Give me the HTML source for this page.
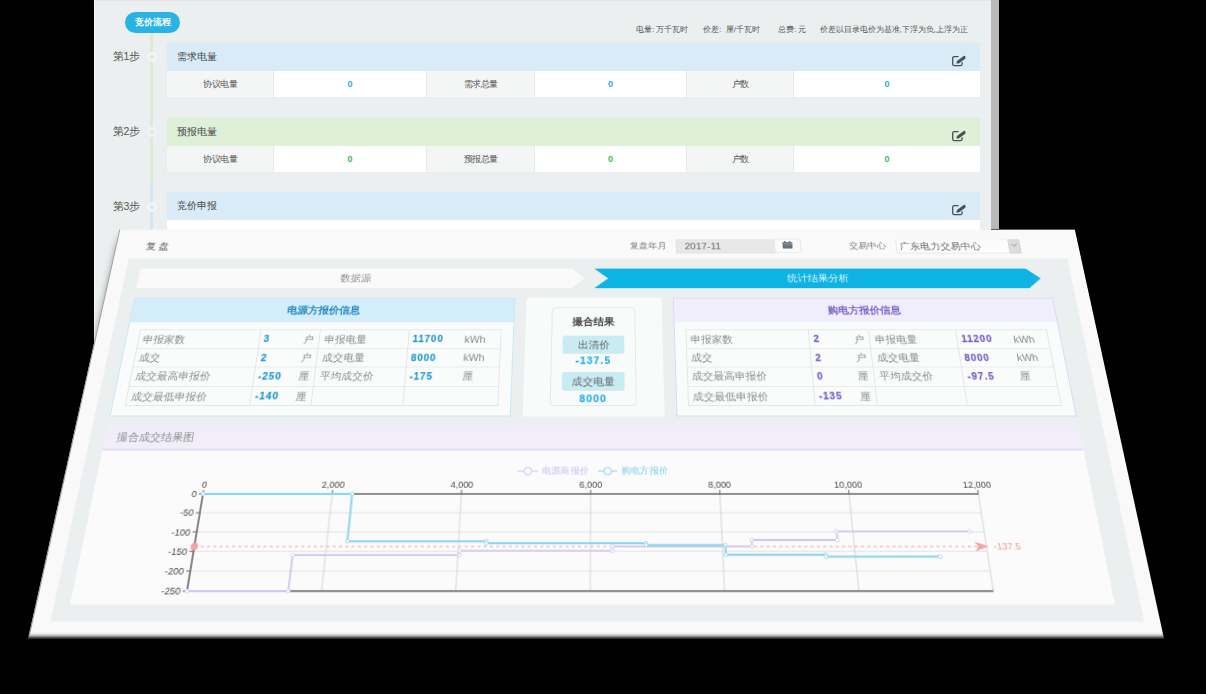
<!DOCTYPE html>
<html><head><meta charset="utf-8">
<style>
*{box-sizing:border-box;margin:0;padding:0}
html,body{width:1206px;height:694px;overflow:hidden;background:#000}
body{position:relative;font-family:"Liberation Sans",sans-serif;color:#555}
.abs{position:absolute}
#top{position:absolute;left:94px;top:0;width:897px;height:600px;background:#ebeff0;overflow:hidden}
#scroll{position:absolute;left:991px;top:0;width:8px;height:229px;background:#b9b9b9}
.pill{left:31px;top:12px;width:55px;height:21px;border-radius:11px;background:#27b4e4;color:#fff;font-size:9px;font-weight:bold;text-align:center;line-height:21px}
.tl{left:56px;width:3px;background:#dcebd4}
.step{left:19px;font-size:10.5px;color:#555;line-height:12px}
.dot{left:52.5px;width:10px;height:10px;border-radius:50%;border:3px solid #f3f5f5;background:#d9ead2}
.card{left:73px;width:813px;height:54px;background:#fff;box-shadow:0 0 1px #dfe3e5}
.card .hd{position:absolute;left:0;top:0;width:100%;height:28px;font-size:10px;color:#444;padding-left:10px;line-height:27px}
.card .row{position:absolute;left:0;top:28px;width:100%;height:26px}
.cell{position:absolute;top:0;height:26px;line-height:26px;text-align:center;font-size:8.5px;color:#555}
.lab{background:#f4f6f6;border-right:1px solid #e6eaeb}
.val{font-weight:bold;font-size:9px}
.edit{position:absolute;left:785px;top:11.6px;width:14px;height:12px}
.lg{top:24px;font-size:8px;color:#555;white-space:nowrap;line-height:12px}
.z{display:inline-block;width:1em;text-align:center;font-style:normal}
</style></head><body>
<div id="top">
  <div class="abs" style="left:0;top:0;width:100%;height:1px;background:#e1e5e7"></div>
  <div class="abs" style="left:0;top:0;width:1px;height:100%;background:#f7f8f8"></div>
  <div class="abs pill"><i class="z">竞</i><i class="z">价</i><i class="z">流</i><i class="z">程</i></div>
  <div class="abs tl" style="top:33px;height:150px"></div>
  <div class="abs tl" style="top:183px;height:520px;background:#d3e6f3"></div>
  <div class="abs step" style="top:50px"><i class="z">第</i>1<i class="z">步</i></div>
  <div class="abs dot" style="top:51.5px"></div>
  <div class="abs step" style="top:125px"><i class="z">第</i>2<i class="z">步</i></div>
  <div class="abs dot" style="top:126.5px"></div>
  <div class="abs step" style="top:200px"><i class="z">第</i>3<i class="z">步</i></div>
  <div class="abs dot" style="top:201.5px;background:#d3e6f3"></div>
  <div class="abs lg" style="left:542px"><i class="z">电</i><i class="z">量</i>: <i class="z">万</i><i class="z">千</i><i class="z">瓦</i><i class="z">时</i></div><div class="abs lg" style="left:609px"><i class="z">价</i><i class="z">差</i>:&nbsp;&nbsp;<i class="z">厘</i>/<i class="z">千</i><i class="z">瓦</i><i class="z">时</i></div><div class="abs lg" style="left:684px"><i class="z">总</i><i class="z">费</i>: <i class="z">元</i></div><div class="abs lg" style="left:725.5px"><i class="z">价</i><i class="z">差</i><i class="z">以</i><i class="z">目</i><i class="z">录</i><i class="z">电</i><i class="z">价</i><i class="z">为</i><i class="z">基</i><i class="z">准</i>,<i class="z">下</i><i class="z">浮</i><i class="z">为</i><i class="z">负</i>,<i class="z">上</i><i class="z">浮</i><i class="z">为</i><i class="z">正</i></div>
  <!-- card 1 -->
  <div class="abs card" style="top:43px">
    <div class="hd" style="background:#d9ebf7"><i class="z">需</i><i class="z">求</i><i class="z">电</i><i class="z">量</i></div>
    <svg class="edit" viewBox="0 0 14 12"><path d="M6.6 1.6H2.3A1.6 1.6 0 0 0 0.7 3.2V9.1A1.6 1.6 0 0 0 2.3 10.7H8.5A1.6 1.6 0 0 0 10.1 9.1V7.2" fill="none" stroke="#4a5056" stroke-width="1.3"/><path d="M4.3 8.6L5.0 6.1L11.7 1.1A1.1 1.1 0 0 1 13.3 1.5L13.5 3.5L6.8 8.5Z" fill="#4a5056"/></svg>
    <div class="row">
      <div class="cell lab" style="left:0;width:107px"><i class="z">协</i><i class="z">议</i><i class="z">电</i><i class="z">量</i></div>
      <div class="cell val" style="left:107px;width:152px;color:#2aaee2">0</div>
      <div class="cell lab" style="left:259px;width:109px;border-left:1px solid #e6eaeb"><i class="z">需</i><i class="z">求</i><i class="z">总</i><i class="z">量</i></div>
      <div class="cell val" style="left:368px;width:151px;color:#2aaee2">0</div>
      <div class="cell lab" style="left:519px;width:108px;border-left:1px solid #e6eaeb"><i class="z">户</i><i class="z">数</i></div>
      <div class="cell val" style="left:627px;width:186px;color:#2aaee2">0</div>
    </div>
  </div>
  <!-- card 2 -->
  <div class="abs card" style="top:118px">
    <div class="hd" style="background:#dff0d8"><i class="z">预</i><i class="z">报</i><i class="z">电</i><i class="z">量</i></div>
    <svg class="edit" viewBox="0 0 14 12"><path d="M6.6 1.6H2.3A1.6 1.6 0 0 0 0.7 3.2V9.1A1.6 1.6 0 0 0 2.3 10.7H8.5A1.6 1.6 0 0 0 10.1 9.1V7.2" fill="none" stroke="#4a5056" stroke-width="1.3"/><path d="M4.3 8.6L5.0 6.1L11.7 1.1A1.1 1.1 0 0 1 13.3 1.5L13.5 3.5L6.8 8.5Z" fill="#4a5056"/></svg>
    <div class="row">
      <div class="cell lab" style="left:0;width:107px"><i class="z">协</i><i class="z">议</i><i class="z">电</i><i class="z">量</i></div>
      <div class="cell val" style="left:107px;width:152px;color:#3cb95a">0</div>
      <div class="cell lab" style="left:259px;width:109px;border-left:1px solid #e6eaeb"><i class="z">预</i><i class="z">报</i><i class="z">总</i><i class="z">量</i></div>
      <div class="cell val" style="left:368px;width:151px;color:#3cb95a">0</div>
      <div class="cell lab" style="left:519px;width:108px;border-left:1px solid #e6eaeb"><i class="z">户</i><i class="z">数</i></div>
      <div class="cell val" style="left:627px;width:186px;color:#3cb95a">0</div>
    </div>
  </div>
  <!-- card 3 -->
  <div class="abs card" style="top:192px">
    <div class="hd" style="background:#d9ebf7"><i class="z">竞</i><i class="z">价</i><i class="z">申</i><i class="z">报</i></div>
    <svg class="edit" viewBox="0 0 14 12"><path d="M6.6 1.6H2.3A1.6 1.6 0 0 0 0.7 3.2V9.1A1.6 1.6 0 0 0 2.3 10.7H8.5A1.6 1.6 0 0 0 10.1 9.1V7.2" fill="none" stroke="#4a5056" stroke-width="1.3"/><path d="M4.3 8.6L5.0 6.1L11.7 1.1A1.1 1.1 0 0 1 13.3 1.5L13.5 3.5L6.8 8.5Z" fill="#4a5056"/></svg>
    <div class="row"></div>
  </div>
</div>
<div id="scroll"></div>

<!-- BOTTOM PANEL -->
<style>
#bp{position:absolute;left:0;top:0;width:1045px;height:420px;transform-origin:0 0;background:#f9f9f9;outline:1px solid transparent;font-family:"Liberation Sans",sans-serif}
#bp .t{position:absolute;white-space:nowrap;line-height:1}
.arrowL{left:32px;top:47px;width:478px;height:23px;background:#fafafa;clip-path:polygon(0 0,463px 0,477.5px 50%,463px 100%,0 100%)}
.arrowR{left:519.5px;top:47px;width:477.5px;height:23px;background:#0db3e3;clip-path:polygon(0 0,463.5px 0,477.5px 50%,463.5px 100%,0 100%,15px 50%)}
.pnl{position:absolute;top:81px;height:130px;background:#fafcfc}
.tbl{position:absolute;width:378px;border:1px solid #e3e6e7}
.tbl .r{position:absolute;left:0;width:100%;height:1px;background:#e8eaea}
.tbl .c{position:absolute;top:0;height:100%;width:1px;background:#e3e6e7}
.tbl .t{font-size:11px;color:#8a8a8a}
.tbl .v{font-size:10px;font-weight:bold;letter-spacing:1px;margin-top:0.5px;-webkit-text-stroke:0.25px currentColor}
</style>
<div id="bp" style="transform:matrix3d(0.9143157895,2.719780807e-17,0,6.68743744e-20,-0.2268856434,0.7287954005,0,-0.0003764543971,0,0,1,0,119.37,229.6,0,1)">
  <!-- header -->
  <div class="abs" style="left:14px;top:11px;width:1017px;height:24px;background:#fafafa"></div>
  <div class="t" style="left:33px;top:14.5px;font-size:11px;color:#7a7a7a;-webkit-text-stroke:0.2px currentColor"><i class="z">复</i> <i class="z">盘</i></div>
  <div class="t" style="left:558px;top:15px;font-size:10px;color:#777"><i class="z">复</i><i class="z">盘</i><i class="z">年</i><i class="z">月</i></div>
  <div class="abs" style="left:608px;top:11.5px;width:108px;height:17px;background:#e8e8e8;border:1px solid #e2e2e2"></div>
  <div class="t" style="left:617.5px;top:15px;font-size:11px;color:#666">2017-11</div>
  <div class="abs" style="left:714.5px;top:11.2px;width:29.7px;height:17.3px;background:#fbfbfb;border:1px solid #e6e8e8;border-radius:2px"></div>
  <svg class="abs" style="left:724px;top:13.8px" width="10.5" height="9" viewBox="0 0 10.5 9"><rect x="0" y="1.2" width="10.5" height="7.8" rx="0.8" fill="#5d6672"/><rect x="0.8" y="2.9" width="8.9" height="0.8" fill="#c9ced3"/><rect x="2" y="0" width="1.3" height="2" fill="#5d6672"/><rect x="7.2" y="0" width="1.3" height="2" fill="#5d6672"/><rect x="1.2" y="4.6" width="8.1" height="3.4" fill="#6b7480"/></svg>
  <div class="t" style="left:795.5px;top:15px;font-size:10px;color:#777"><i class="z">交</i><i class="z">易</i><i class="z">中</i><i class="z">心</i></div>
  <div class="abs" style="left:847px;top:12px;width:134.5px;height:16.5px;background:#fcfcfc;border:1px solid #e6e6e6;border-top-color:#f4f4f4"></div>
  <div class="t" style="left:851px;top:15px;font-size:11px;color:#666"><i class="z">广</i><i class="z">东</i><i class="z">电</i><i class="z">力</i><i class="z">交</i><i class="z">易</i><i class="z">中</i><i class="z">心</i></div>
  <div class="abs" style="left:969px;top:12px;width:12.5px;height:16.5px;background:#dcdcdc;border:1px solid #d2d2d2"></div>
  <svg class="abs" style="left:971px;top:16.3px" width="9" height="6" viewBox="0 0 9 6"><path d="M1.5 1.5l3 2.5 3-2.5" fill="none" stroke="#888" stroke-width="1"/></svg>
  <!-- gray band -->
  <div class="abs" style="left:16.5px;top:35px;width:1013px;height:371.7px;background:#eceff0"></div>
  <!-- arrows -->
  <div class="abs arrowL"></div>
  <div class="t" style="left:247.5px;top:53px;font-size:11px;color:#8d8d8d"><i class="z">数</i><i class="z">据</i><i class="z">源</i></div>
  <div class="abs arrowR"></div>
  <div class="t" style="left:725.5px;top:53px;font-size:11px;color:#dff4fb"><i class="z">统</i><i class="z">计</i><i class="z">结</i><i class="z">果</i><i class="z">分</i><i class="z">析</i></div>
  <!-- left panel -->
  <div class="pnl" style="left:32px;width:404px;border:1px solid #c5e9f6">
    <div class="abs" style="left:0;top:0;width:100%;height:26.5px;background:#d3eef9"></div>
    <div class="t" style="left:0;width:100%;text-align:center;top:8px;font-size:11px;font-weight:bold;color:#2488c4"><i class="z">电</i><i class="z">源</i><i class="z">方</i><i class="z">报</i><i class="z">价</i><i class="z">信</i><i class="z">息</i></div>
    <div class="tbl" style="left:11.7px;top:35.4px;height:82.6px">
    <div class="r" style="top:19.6px"></div>
    <div class="r" style="top:39.6px"></div>
    <div class="r" style="top:60.8px"></div>
    <div class="c" style="left:125px"></div>
    <div class="c" style="left:187.5px"></div>
    <div class="c" style="left:280px"></div>
    <div class="t" style="left:4px;top:4.5px"><i class="z">申</i><i class="z">报</i><i class="z">家</i><i class="z">数</i></div>
    <div class="t v" style="left:130.0px;top:4.5px;color:#2a9ad3">3</div>
    <div class="t" style="left:171.5px;top:4.5px"><i class="z">户</i></div>
    <div class="t" style="left:193.5px;top:4.5px"><i class="z">申</i><i class="z">报</i><i class="z">电</i><i class="z">量</i></div>
    <div class="t v" style="left:285.0px;top:4.5px;color:#2a9ad3">11700</div>
    <div class="t" style="left:339.0px;top:4.5px">kWh</div>
    <div class="t" style="left:4px;top:25.1px"><i class="z">成</i><i class="z">交</i></div>
    <div class="t v" style="left:130.0px;top:25.1px;color:#2a9ad3">2</div>
    <div class="t" style="left:171.5px;top:25.1px"><i class="z">户</i></div>
    <div class="t" style="left:193.5px;top:25.1px"><i class="z">成</i><i class="z">交</i><i class="z">电</i><i class="z">量</i></div>
    <div class="t v" style="left:285.0px;top:25.1px;color:#2a9ad3">8000</div>
    <div class="t" style="left:339.0px;top:25.1px">kWh</div>
    <div class="t" style="left:4px;top:45.1px"><i class="z">成</i><i class="z">交</i><i class="z">最</i><i class="z">高</i><i class="z">申</i><i class="z">报</i><i class="z">价</i></div>
    <div class="t v" style="left:130.0px;top:45.1px;color:#2a9ad3">-250</div>
    <div class="t" style="left:171.5px;top:45.1px"><i class="z">厘</i></div>
    <div class="t" style="left:193.5px;top:45.1px"><i class="z">平</i><i class="z">均</i><i class="z">成</i><i class="z">交</i><i class="z">价</i></div>
    <div class="t v" style="left:285.0px;top:45.1px;color:#2a9ad3">-175</div>
    <div class="t" style="left:339.0px;top:45.1px"><i class="z">厘</i></div>
    <div class="t" style="left:4px;top:66.3px"><i class="z">成</i><i class="z">交</i><i class="z">最</i><i class="z">低</i><i class="z">申</i><i class="z">报</i><i class="z">价</i></div>
    <div class="t v" style="left:130.0px;top:66.3px;color:#2a9ad3">-140</div>
    <div class="t" style="left:171.5px;top:66.3px"><i class="z">厘</i></div>
    </div>
  </div>
  <!-- middle panel -->
  <div class="pnl" style="left:447.5px;width:143px;background:#f9fafa">
    <div class="abs" style="left:27px;top:10.8px;width:88.5px;height:108px;border:1px solid #d7edf4;border-radius:4px"></div>
    <div class="t" style="left:0;width:100%;text-align:center;top:21.6px;font-size:11px;font-weight:bold;color:#444"><i class="z">撮</i><i class="z">合</i><i class="z">结</i><i class="z">果</i></div>
    <div class="abs" style="left:39px;top:43.3px;width:64px;height:19.5px;background:#c9ebf3;border-radius:3px"></div>
    <div class="t" style="left:0;width:100%;text-align:center;top:47.8px;font-size:11px;color:#666"><i class="z">出</i><i class="z">清</i><i class="z">价</i></div>
    <div class="t" style="left:0;width:100%;text-align:center;top:64.6px;font-size:10.5px;font-weight:bold;letter-spacing:1.2px;-webkit-text-stroke:0.25px currentColor;color:#2ab0e4">-137.5</div>
    <div class="abs" style="left:39px;top:83.4px;width:64px;height:20px;background:#c9ebf3;border-radius:3px"></div>
    <div class="t" style="left:0;width:100%;text-align:center;top:87.8px;font-size:11px;color:#666"><i class="z">成</i><i class="z">交</i><i class="z">电</i><i class="z">量</i></div>
    <div class="t" style="left:0;width:100%;text-align:center;top:106px;font-size:10.5px;font-weight:bold;letter-spacing:1.2px;-webkit-text-stroke:0.25px currentColor;color:#2ab0e4">8000</div>
  </div>
  <!-- right panel -->
  <div class="pnl" style="left:602.5px;width:403px;border:1px solid #ddd7f6">
    <div class="abs" style="left:0;top:0;width:100%;height:27px;background:#f0eefb"></div>
    <div class="t" style="left:0;width:100%;text-align:center;top:8px;font-size:11px;font-weight:bold;color:#7b62c8"><i class="z">购</i><i class="z">电</i><i class="z">方</i><i class="z">报</i><i class="z">价</i><i class="z">信</i><i class="z">息</i></div>
    <div class="tbl" style="left:11.7px;top:35.4px;height:82.6px">
    <div class="r" style="top:19.6px"></div>
    <div class="r" style="top:39.6px"></div>
    <div class="r" style="top:60.8px"></div>
    <div class="c" style="left:127px"></div>
    <div class="c" style="left:189.5px"></div>
    <div class="c" style="left:281px"></div>
    <div class="t" style="left:4px;top:4.5px"><i class="z">申</i><i class="z">报</i><i class="z">家</i><i class="z">数</i></div>
    <div class="t v" style="left:132.0px;top:4.5px;color:#7a5fc6">2</div>
    <div class="t" style="left:173.5px;top:4.5px"><i class="z">户</i></div>
    <div class="t" style="left:195.5px;top:4.5px"><i class="z">申</i><i class="z">报</i><i class="z">电</i><i class="z">量</i></div>
    <div class="t v" style="left:286.0px;top:4.5px;color:#7a5fc6">11200</div>
    <div class="t" style="left:340.0px;top:4.5px">kWh</div>
    <div class="t" style="left:4px;top:25.1px"><i class="z">成</i><i class="z">交</i></div>
    <div class="t v" style="left:132.0px;top:25.1px;color:#7a5fc6">2</div>
    <div class="t" style="left:173.5px;top:25.1px"><i class="z">户</i></div>
    <div class="t" style="left:195.5px;top:25.1px"><i class="z">成</i><i class="z">交</i><i class="z">电</i><i class="z">量</i></div>
    <div class="t v" style="left:286.0px;top:25.1px;color:#7a5fc6">8000</div>
    <div class="t" style="left:340.0px;top:25.1px">kWh</div>
    <div class="t" style="left:4px;top:45.1px"><i class="z">成</i><i class="z">交</i><i class="z">最</i><i class="z">高</i><i class="z">申</i><i class="z">报</i><i class="z">价</i></div>
    <div class="t v" style="left:132.0px;top:45.1px;color:#7a5fc6">0</div>
    <div class="t" style="left:173.5px;top:45.1px"><i class="z">厘</i></div>
    <div class="t" style="left:195.5px;top:45.1px"><i class="z">平</i><i class="z">均</i><i class="z">成</i><i class="z">交</i><i class="z">价</i></div>
    <div class="t v" style="left:286.0px;top:45.1px;color:#7a5fc6">-97.5</div>
    <div class="t" style="left:340.0px;top:45.1px"><i class="z">厘</i></div>
    <div class="t" style="left:4px;top:66.3px"><i class="z">成</i><i class="z">交</i><i class="z">最</i><i class="z">低</i><i class="z">申</i><i class="z">报</i><i class="z">价</i></div>
    <div class="t v" style="left:132.0px;top:66.3px;color:#7a5fc6">-135</div>
    <div class="t" style="left:173.5px;top:66.3px"><i class="z">厘</i></div>
    </div>
  </div>
  <!-- chart header -->
  <div class="abs" style="left:32px;top:220px;width:973.5px;height:25.5px;background:#f1eefa;border-bottom:2px solid #e4ddf6"></div>
  <div class="t" style="left:44px;top:227px;font-size:11px;color:#8d8d8d"><i class="z">撮</i><i class="z">合</i><i class="z">成</i><i class="z">交</i><i class="z">结</i><i class="z">果</i><i class="z">图</i></div>
  <!-- chart area -->
  <div class="abs" style="left:32px;top:245.5px;width:973.5px;height:146px;background:#fbfbfb"></div>
  <svg class="abs" style="left:0;top:0;overflow:visible" width="1045" height="420" viewBox="0 0 1045 420" font-family="Liberation Sans, sans-serif">
<line x1="139.0" y1="307.2" x2="894.8" y2="307.2" stroke="#e3e3e3" stroke-width="1"/>
<line x1="139.0" y1="325.4" x2="894.8" y2="325.4" stroke="#e3e3e3" stroke-width="1"/>
<line x1="139.0" y1="343.6" x2="894.8" y2="343.6" stroke="#e3e3e3" stroke-width="1"/>
<line x1="139.0" y1="361.8" x2="894.8" y2="361.8" stroke="#e3e3e3" stroke-width="1"/>
<line x1="265.0" y1="289.0" x2="265.0" y2="380.0" stroke="#d6d6d6" stroke-width="1"/>
<line x1="390.9" y1="289.0" x2="390.9" y2="380.0" stroke="#d6d6d6" stroke-width="1"/>
<line x1="516.9" y1="289.0" x2="516.9" y2="380.0" stroke="#d6d6d6" stroke-width="1"/>
<line x1="642.9" y1="289.0" x2="642.9" y2="380.0" stroke="#d6d6d6" stroke-width="1"/>
<line x1="768.8" y1="289.0" x2="768.8" y2="380.0" stroke="#d6d6d6" stroke-width="1"/>
<line x1="894.8" y1="289.0" x2="894.8" y2="380.0" stroke="#d6d6d6" stroke-width="1"/>
<line x1="139.0" y1="289.0" x2="894.8" y2="289.0" stroke="#6e6e6e" stroke-width="1.6"/>
<line x1="139.0" y1="380.0" x2="894.8" y2="380.0" stroke="#6e6e6e" stroke-width="1.6"/>
<line x1="139.0" y1="289.0" x2="139.0" y2="380.0" stroke="#555" stroke-width="1.4"/>
<line x1="139.0" y1="285.0" x2="139.0" y2="289.0" stroke="#6e6e6e" stroke-width="1"/>
<text x="139.0" y="283.0" text-anchor="middle" font-size="9" fill="#4a4a4a">0</text>
<line x1="265.0" y1="285.0" x2="265.0" y2="289.0" stroke="#6e6e6e" stroke-width="1"/>
<text x="265.0" y="283.0" text-anchor="middle" font-size="9" fill="#4a4a4a">2,000</text>
<line x1="390.9" y1="285.0" x2="390.9" y2="289.0" stroke="#6e6e6e" stroke-width="1"/>
<text x="390.9" y="283.0" text-anchor="middle" font-size="9" fill="#4a4a4a">4,000</text>
<line x1="516.9" y1="285.0" x2="516.9" y2="289.0" stroke="#6e6e6e" stroke-width="1"/>
<text x="516.9" y="283.0" text-anchor="middle" font-size="9" fill="#4a4a4a">6,000</text>
<line x1="642.9" y1="285.0" x2="642.9" y2="289.0" stroke="#6e6e6e" stroke-width="1"/>
<text x="642.9" y="283.0" text-anchor="middle" font-size="9" fill="#4a4a4a">8,000</text>
<line x1="768.8" y1="285.0" x2="768.8" y2="289.0" stroke="#6e6e6e" stroke-width="1"/>
<text x="768.8" y="283.0" text-anchor="middle" font-size="9" fill="#4a4a4a">10,000</text>
<line x1="894.8" y1="285.0" x2="894.8" y2="289.0" stroke="#6e6e6e" stroke-width="1"/>
<text x="894.8" y="283.0" text-anchor="middle" font-size="9" fill="#4a4a4a">12,000</text>
<line x1="135.0" y1="289.0" x2="139.0" y2="289.0" stroke="#6e6e6e" stroke-width="1"/>
<text x="133.0" y="292.3" text-anchor="end" font-size="9" fill="#4a4a4a">0</text>
<line x1="135.0" y1="307.2" x2="139.0" y2="307.2" stroke="#6e6e6e" stroke-width="1"/>
<text x="133.0" y="310.5" text-anchor="end" font-size="9" fill="#4a4a4a">-50</text>
<line x1="135.0" y1="325.4" x2="139.0" y2="325.4" stroke="#6e6e6e" stroke-width="1"/>
<text x="133.0" y="328.7" text-anchor="end" font-size="9" fill="#4a4a4a">-100</text>
<line x1="135.0" y1="343.6" x2="139.0" y2="343.6" stroke="#6e6e6e" stroke-width="1"/>
<text x="133.0" y="346.9" text-anchor="end" font-size="9" fill="#4a4a4a">-150</text>
<line x1="135.0" y1="361.8" x2="139.0" y2="361.8" stroke="#6e6e6e" stroke-width="1"/>
<text x="133.0" y="365.1" text-anchor="end" font-size="9" fill="#4a4a4a">-200</text>
<line x1="135.0" y1="380.0" x2="139.0" y2="380.0" stroke="#6e6e6e" stroke-width="1"/>
<text x="133.0" y="383.3" text-anchor="end" font-size="9" fill="#4a4a4a">-250</text>
<line x1="139.0" y1="339.1" x2="888.8" y2="339.1" stroke="#f4a6a6" stroke-width="1" stroke-dasharray="3 3"/>
<path d="M896.8 339.1 l-13 -4.5 l3.5 4.5 l-3.5 4.5z" fill="#f3a0a0"/>
<text x="901.8" y="342.2" font-size="9" fill="#f29a9a">-137.5</text>
<circle cx="139.0" cy="339.1" r="3.5" fill="#f3a3a3"/>
<path d="M139.0 380.0 L233.8 380.0 L233.8 347.1 L392.2 347.1 L392.2 343.2 L537.9 343.2 L537.9 339.2 L671.2 339.2 L671.2 333.0 L753.1 333.0 L753.1 324.8 L880.6 324.8" fill="none" stroke="#d2c9f0" stroke-width="1.8"/>
<path d="M139.0 289.0 L284.5 289.0 L284.5 334.3 L417.4 334.3 L417.4 336.1 L570.1 336.1 L570.1 337.8 L645.7 337.8 L645.7 346.7 L740.8 346.7 L740.8 348.5 L849.1 348.5" fill="none" stroke="#8fd5ef" stroke-width="2"/>
<circle cx="139.0" cy="380.0" r="1.7" fill="#fff" stroke="#d2c9f0" stroke-width="0.8"/>
<circle cx="233.8" cy="380.0" r="1.7" fill="#fff" stroke="#d2c9f0" stroke-width="0.8"/>
<circle cx="233.8" cy="347.1" r="1.7" fill="#fff" stroke="#d2c9f0" stroke-width="0.8"/>
<circle cx="392.2" cy="347.1" r="1.7" fill="#fff" stroke="#d2c9f0" stroke-width="0.8"/>
<circle cx="392.2" cy="343.2" r="1.7" fill="#fff" stroke="#d2c9f0" stroke-width="0.8"/>
<circle cx="537.9" cy="343.2" r="1.7" fill="#fff" stroke="#d2c9f0" stroke-width="0.8"/>
<circle cx="537.9" cy="339.2" r="1.7" fill="#fff" stroke="#d2c9f0" stroke-width="0.8"/>
<circle cx="671.2" cy="339.2" r="1.7" fill="#fff" stroke="#d2c9f0" stroke-width="0.8"/>
<circle cx="671.2" cy="333.0" r="1.7" fill="#fff" stroke="#d2c9f0" stroke-width="0.8"/>
<circle cx="753.1" cy="333.0" r="1.7" fill="#fff" stroke="#d2c9f0" stroke-width="0.8"/>
<circle cx="753.1" cy="324.8" r="1.7" fill="#fff" stroke="#d2c9f0" stroke-width="0.8"/>
<circle cx="880.6" cy="324.8" r="1.7" fill="#fff" stroke="#d2c9f0" stroke-width="0.8"/>
<circle cx="139.0" cy="289.0" r="1.7" fill="#fff" stroke="#8fd5ef" stroke-width="0.8"/>
<circle cx="284.5" cy="289.0" r="1.7" fill="#fff" stroke="#8fd5ef" stroke-width="0.8"/>
<circle cx="284.5" cy="334.3" r="1.7" fill="#fff" stroke="#8fd5ef" stroke-width="0.8"/>
<circle cx="417.4" cy="334.3" r="1.7" fill="#fff" stroke="#8fd5ef" stroke-width="0.8"/>
<circle cx="417.4" cy="336.1" r="1.7" fill="#fff" stroke="#8fd5ef" stroke-width="0.8"/>
<circle cx="570.1" cy="336.1" r="1.7" fill="#fff" stroke="#8fd5ef" stroke-width="0.8"/>
<circle cx="570.1" cy="337.8" r="1.7" fill="#fff" stroke="#8fd5ef" stroke-width="0.8"/>
<circle cx="645.7" cy="337.8" r="1.7" fill="#fff" stroke="#8fd5ef" stroke-width="0.8"/>
<circle cx="645.7" cy="346.7" r="1.7" fill="#fff" stroke="#8fd5ef" stroke-width="0.8"/>
<circle cx="740.8" cy="346.7" r="1.7" fill="#fff" stroke="#8fd5ef" stroke-width="0.8"/>
<circle cx="740.8" cy="348.5" r="1.7" fill="#fff" stroke="#8fd5ef" stroke-width="0.8"/>
<circle cx="849.1" cy="348.5" r="1.7" fill="#fff" stroke="#8fd5ef" stroke-width="0.8"/>
<line x1="445" y1="266.6" x2="465" y2="266.6" stroke="#cfc6ef" stroke-width="1"/><circle cx="455" cy="266.6" r="3.8" fill="#fbfbfb" stroke="#cfc6ef" stroke-width="1"/>
<line x1="524" y1="266.6" x2="543" y2="266.6" stroke="#8ed4ee" stroke-width="1"/><circle cx="533.5" cy="266.6" r="3.8" fill="#fbfbfb" stroke="#8ed4ee" stroke-width="1"/>
</svg>
  <div class="t" style="left:468.6px;top:262px;font-size:9.3px;color:#c9bdf0"><i class="z">电</i><i class="z">源</i><i class="z">商</i><i class="z">报</i><i class="z">价</i></div>
  <div class="t" style="left:546.6px;top:262px;font-size:9.3px;color:#7fcdeb"><i class="z">购</i><i class="z">电</i><i class="z">方</i><i class="z">报</i><i class="z">价</i></div>
  <!-- bottom edge shade -->
  <div class="abs" style="left:0;top:416.8px;width:1045px;height:5.2px;background:linear-gradient(#f9f9f9,#c8c8c8 40%,#8c8c8c 65%,#3a3a3a 88%,#000 100%)"></div>
  <div class="abs" style="left:-8px;top:0;width:8px;height:420px;background:linear-gradient(90deg,rgba(0,0,0,0),rgba(0,0,0,.04) 55%,rgba(0,0,0,.16));-webkit-mask-image:linear-gradient(rgba(0,0,0,0),#000 22px)"></div>
  <div class="abs" style="left:0;top:0;width:1px;height:420px;background:#9a9a9a"></div>
</div>
</body></html>
